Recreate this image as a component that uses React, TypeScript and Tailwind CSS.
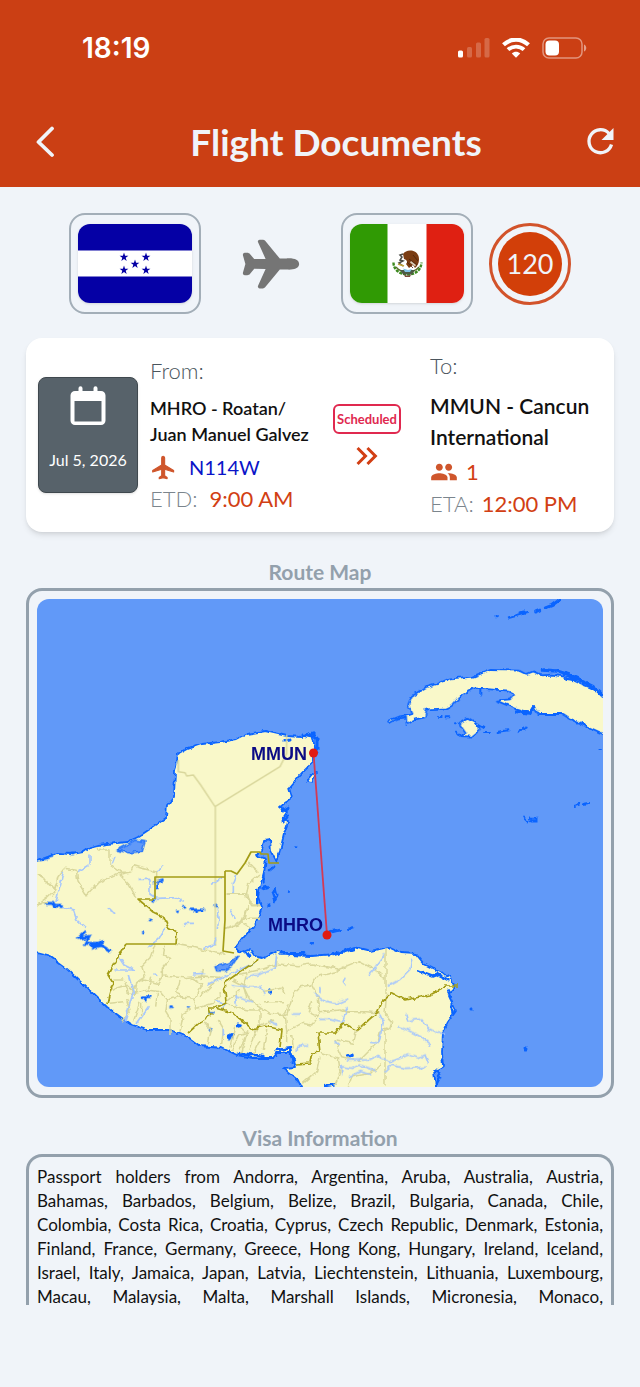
import { IoAirplane } from 'react-icons/io5'
import { MdKeyboardDoubleArrowRight, MdPeople } from 'react-icons/md'

const visaLines = [
  'Passport holders from Andorra, Argentina, Aruba, Australia, Austria,',
  'Bahamas, Barbados, Belgium, Belize, Brazil, Bulgaria, Canada, Chile,',
  'Colombia, Costa Rica, Croatia, Cyprus, Czech Republic, Denmark, Estonia,',
  'Finland, France, Germany, Greece, Hong Kong, Hungary, Ireland, Iceland,',
  'Israel, Italy, Jamaica, Japan, Latvia, Liechtenstein, Lithuania, Luxembourg,',
  'Macau, Malaysia, Malta, Marshall Islands, Micronesia, Monaco,',
]

function StatusBar() {
  return (
    <div className="flex h-24 items-center justify-between pl-[82px] pr-[53px]">
      <span className="font-['Inter',sans-serif] text-[28px] font-semibold leading-8">18:19</span>
      <div className="flex items-center gap-3">
        <svg width="32" height="20" viewBox="0 0 32 20" fill="currentColor" aria-hidden="true">
          <rect x="0" y="12.500" width="5" height="7" rx="1.500" />
          <rect x="9" y="9" width="5" height="10.500" rx="1.500" opacity=".22" />
          <rect x="18" y="4.500" width="5" height="15" rx="1.500" opacity=".22" />
          <rect x="26.500" y="0" width="5" height="19.500" rx="1.500" opacity=".22" />
        </svg>
        <svg width="28" height="20" viewBox="0 0 28 20" fill="none" stroke="currentColor" aria-hidden="true">
          <path d="M1.500 6.800C9 -.2 19 -.2 26.500 6.800" strokeWidth="4.200" />
          <path d="M6 11.700c4.300-4.200 11.700-4.200 16 0" strokeWidth="3.800" />
          <path d="M14 19.800l-4.200-4.300c2.400-2.300 6-2.300 8.400 0z" fill="currentColor" stroke="none" />
        </svg>
        <svg width="45" height="22" viewBox="0 0 45 22" aria-hidden="true">
          <rect x="1" y="1" width="39" height="20" rx="6" fill="none" stroke="#fff" strokeOpacity=".45" strokeWidth="1.500" />
          <rect x="3.500" y="3.500" width="13.500" height="15" rx="4" fill="#fff" />
          <path d="M42 7.500c3 1.200 3 5.800 0 7z" fill="#fff" opacity=".5" />
        </svg>
      </div>
    </div>
  )
}

function Header() {
  return (
    <header className="shrink-0 bg-[#cb3f14] text-white">
      <StatusBar />
      <div className="flex h-[91px] items-center justify-between pl-9 pr-6">
        <button type="button" aria-label="Back" className="w-[52px]">
          <svg width="20" height="32" viewBox="0 0 20 32" fill="none" stroke="#f0f4f9" strokeWidth="3.800" strokeLinecap="round" strokeLinejoin="round">
            <path d="M16 2.500L2.500 16 16 29" />
          </svg>
        </button>
        <h1 className="text-[37px] font-bold leading-10 text-[#f0f4f9]">Flight Documents</h1>
        <button type="button" aria-label="Refresh" className="text-[#f0f4f9]">
          <svg width="32" height="32" viewBox="0 0 32 32" fill="none" stroke="currentColor" strokeWidth="3.300">
            <path d="M25 7.500A11.500 11.500 0 1 0 27.500 18.500" />
            <path d="M29.500 2v12h-12z" fill="currentColor" stroke="none" />
          </svg>
        </button>
      </div>
    </header>
  )
}

function HondurasFlag() {
  const stars = [[46, 33], [68, 33], [57, 40], [46, 46], [68, 46]]
  return (
    <svg viewBox="0 0 114 79" className="h-[79px] w-[114px] rounded-xl shadow-sm" role="img" aria-label="Honduras">
      <path fill="#0500a5" d="M0 0h114v79H0z" />
      <path fill="#fff" d="M0 26.500h114v26H0z" />
      {stars.map(([x, y]) => (
        <path
          key={`${x}-${y}`}
          transform={`translate(${x} ${y})`}
          fill="#0500a5"
          d="M0-4.400l1.100 3.100h3.300L1.700.7l1 3.200L0 2l-2.700 1.900 1-3.200-2.700-2h3.300z"
        />
      ))}
    </svg>
  )
}

function MexicoFlag() {
  return (
    <svg viewBox="0 0 114 79" className="h-[79px] w-[114px] rounded-xl shadow-sm" role="img" aria-label="Mexico">
      <path fill="#fff" d="M0 0h114v79H0z" />
      <path fill="#309a04" d="M0 0h37.500v79H0z" />
      <path fill="#df2012" d="M76.500 0H114v79H76.500z" />
      <path d="M43.500 38.500c0 15 27 17 28 0" fill="none" stroke="#3d8a1f" strokeWidth="2.400" strokeDasharray="3 1" />
      <path d="M46 43c5 6 17 7 23 0" fill="none" stroke="#5b6b2a" strokeWidth="1.200" />
      <path d="M50 46h15l-3 4.500h-9z" fill="#4d5a45" />
      <path d="M53 44.500l5 1.500 4-1-2 3h-5z" fill="#7fc4e8" />
      <path d="M53 30c3-5 13-5 15.500 2 1.500 5-.5 10-3.500 12l-2-3-4 3-3-4c2-2 1-4-2-5z" fill="#7a3c12" />
      <path d="M59 35l8 6M57 38l6 6M63 31l5 6" stroke="#4a230a" strokeWidth=".8" />
      <path d="M61 37l5 4-1 1.500-5-4z" fill="#d9cdb8" />
      <path d="M53 30l-3 1 2 2-2 3 3 1-4 2 4 3" fill="none" stroke="#4b4b44" strokeWidth="1.500" />
      <path d="M48 40l6 2" stroke="#c0a43a" strokeWidth="1.500" />
      <path d="M54 50.500c2 1.500 5 1.500 7 0l-1 2.500h-5z" fill="#7c4a3a" />
    </svg>
  )
}

function FlagRow() {
  return (
    <div className="flex items-center justify-center">
      <div className="rounded-2xl border-2 border-[#a3aeb8] px-[7px] py-[9px]">
        <HondurasFlag />
      </div>
      <IoAirplane className="mx-10 h-[60px] w-[60px] text-[#757575]" aria-hidden="true" />
      <div className="rounded-2xl border-2 border-[#a3aeb8] px-[7px] py-[9px]">
        <MexicoFlag />
      </div>
      <div className="ml-4 rounded-full border-[3px] border-[#d2532b] p-[6px]">
        <div className="flex h-16 w-16 items-center justify-center rounded-full bg-[#d23f09] text-[27px] leading-8 text-[#f0f4f9]">
          120
        </div>
      </div>
    </div>
  )
}

function FlightCard() {
  return (
    <section className="flex items-center rounded-2xl bg-white py-3 pl-3 pr-5 shadow-md">
      <div className="flex h-[116px] w-[100px] shrink-0 flex-col items-center rounded-lg border border-[#3f484e] bg-[#57626a] pt-2 text-white shadow">
        <svg width="36" height="40" viewBox="0 0 36 40" aria-hidden="true">
          <path
            fill="#fff"
            fillRule="evenodd"
            d="M8.500 5V2.200a2 2 0 0 1 4 0V5h11V2.200a2 2 0 0 1 4 0V5H31a4.500 4.500 0 0 1 4.500 4.500v25A4.500 4.500 0 0 1 31 39H5a4.500 4.500 0 0 1-4.500-4.500v-25A4.500 4.500 0 0 1 5 5zM4.500 15v20.500h27V15z"
          />
        </svg>
        <span className="mt-6 whitespace-nowrap text-base leading-5">Jul 5, 2026</span>
      </div>
      <div className="ml-3 w-[180px] shrink-0">
        <p className="text-[22px] font-light leading-8 text-[#4b555d]">From:</p>
        <p className="mt-2 text-lg font-semibold leading-[26px] text-[#111]">
          MHRO - Roatan/
          <br />
          Juan Manuel Galvez
        </p>
        <p className="mt-1 flex items-center gap-3 text-xl leading-8 text-[#0a14c8]">
          <svg width="27" height="27" viewBox="0 0 24 24" fill="#cf562c" stroke="#cf562c" strokeWidth="1" strokeLinejoin="round" aria-hidden="true">
            <path d="M21 16v-1.300l-8-4.900V3.500c0-.8-.6-1.500-1.300-1.500s-1.300.7-1.300 1.500v6.300l-8 4.900V16l8-2.400v5.800l-2.200 1.500v1l3.500-.9 3.500.9v-1L13 19.400v-5.800z" />
          </svg>
          N114W
        </p>
        <p className="flex gap-3 text-[22px] leading-8 text-[#d23f14]">
          <span className="font-light text-[#7b858d]">ETD:</span>
          9:00 AM
        </p>
      </div>
      <div className="flex w-[74px] shrink-0 flex-col items-center pt-2">
        <span className="flex h-[30px] items-center rounded-md border-2 border-[#e0294f] px-[2px] text-[13px] font-bold leading-4 text-[#e0294f]">Scheduled</span>
        <MdKeyboardDoubleArrowRight className="mt-1 h-9 w-9 text-[#d23f14]" aria-hidden="true" />
      </div>
      <div className="ml-[26px] min-w-0 flex-1 whitespace-nowrap">
        <p className="text-[22px] font-light leading-8 text-[#4b555d]">To:</p>
        <p className="mt-2 text-[21px] font-semibold leading-[31px] text-[#111]">
          MMUN - Cancun
          <br />
          International
        </p>
        <p className="mt-1 flex items-center gap-2 text-[22px] leading-8 text-[#d23f14]">
          <MdPeople className="h-7 w-7 text-[#cf562c]" aria-hidden="true" />1
        </p>
        <p className="flex gap-2 text-[22px] leading-8 text-[#d23f14]">
          <span className="font-light text-[#7b858d]">ETA:</span>
          12:00 PM
        </p>
      </div>
    </section>
  )
}

function RouteMap() {
  return (
    <svg viewBox="37 599 566 488" className="block w-full rounded-xl bg-[#6199f8]" role="img" aria-label="Route from MHRO to MMUN">
      <defs>
        <filter id="rough" x="-5%" y="-5%" width="110%" height="110%" colorInterpolationFilters="sRGB">
          <feTurbulence type="fractalNoise" baseFrequency="0.16" numOctaves="2" seed="4" />
          <feDisplacementMap in="SourceGraphic" scale="5" xChannelSelector="R" yChannelSelector="G" />
        </filter>
      </defs>

      {/* coastline */}
      <g filter="url(#rough)" fill="#f9f8c9" stroke="#0a64ff" strokeWidth="1.800" strokeLinejoin="round">
        <path d="M25 865l12-4 8-3 12-5 15 1 11-2 7-5 8-2 19-2 10-1 11-5 12-8 16-11 1-13 7-8 1-25 3-18 9-5 15-5 18-2 17-3 10-5 18-3 22 5 15 1 6-5 5 6 2 9-2 15-13 13-11 13 3 10-12 9 7 5-4 6 5 4-4 12-4 17-3 11-6-11-1-12-6 1-2 11-6 4 10 4-2 13-4 15-2 10 4 10-5 15-13 15-9 11 6 4 8-3 5 7 9 2 16-7 12 4 20 1 23-2 20-7 17 4 17-4 13 6 15 1 8 10 14 7 13 6 3 9-5 10 7 15-8 11-5 10-1 20 1 15-9 5 4 30H308l-10-22-15-12 13-1-4-14-15 0-4 5-20 0-16-3-15-7-22-2-12-9-18-7h-23l-17-6-23-17-20-19-20-19-19-14-23-6z" />
        <path d="M308 779l6-7 2 1-4 10-4-1z" />
        <g transform="translate(320 580) scale(.33333)" strokeWidth="5.400">
          <path d="M205 422l30-12 30-5 12-4-12-28 10-25 40-25 40-12 35-16 70-5 50-20 90 2 20 10 20-8 25 12 30-2 40 6 45 20 50 20 35 30V468L795 437 745 415 725 402H655L640 380 628 398 585 385 528 362 570 358 582 345 570 332 460 325 420 350 395 378 380 385 320 388 315 412 285 418 260 432 258 412 232 416 208 430z" />
          <path d="M418 430l25-14 30 18 4 18-22 18-35-2 18-10z" />
        </g>
      </g>

      {/* islands, cays and lakes */}
      <g filter="url(#rough)" stroke="#0a64ff" fill="none" strokeLinecap="round">
        <g transform="translate(320 580) scale(.33333)" strokeWidth="9">
          <path d="M568 112l30-8 22-6M600 98l12-2M647 96l15-6M676 84l20-8 22-16M528 110h1" />
          <path d="M670 270l40 3 40 12 40 18 35 25 20 20M740 295l40 5 40 20M590 395l40 5 12-20" strokeWidth="10" />
          <path d="M357 411h8M380 412h8M492 459h18M530 456l35-5M596 455l24-12M408 455l10 10M484 330v14M405 430h2M475 436l15 8M762 678l15-4M790 672l18-3M838 510h8" strokeWidth="6" />
          <path d="M612 712l12 12 4-12M632 716h18v6h-16z" strokeWidth="5" />
        </g>
        <path d="M471 1010h1M525 1049h1M285 741l5-1M302 735l10 2M312 733l4 4M317 738v14M283 811l6-4M283 822l4-5" strokeWidth="3" />
        <g transform="translate(220 820) scale(.33333)" strokeWidth="8">
          <path d="M226 80h2M207 215h2M146 257h2M270 370h8M330 334l32-4M388 326l8-2M157 222l10-15 5 20-8 15zM133 160v30M150 150l12-10M112 210v40M128 205l15-4" />
          <path d="M598 452l40 15 12-5 35 18M685 515l8 15M695 560l3 20M170 690l40-5 8 40M60 700l70 8M650 750l10 20-12 25M315 798l30-5M80 395l10 15M182 400h70M340 405l60-18" />
          <path d="M385 708l8-2M150 510v6M56 615v3M26 650l10-5" strokeWidth="11" />
        </g>
        <g transform="translate(20 820) scale(.33333)" strokeWidth="8">
          <path d="M78 250h20l5 8 22 2M175 355l30-5-10 20 35 0-8 12 20-6 30 18M180 350l14-12M215 380l30-15" strokeWidth="9" />
          <path d="M405 188l22-6M412 190v14M512 270h40M530 272v4M472 272h1M490 262h5M584 258h4M370 336h2M390 300h1M398 241h6M370 530h18M376 535v6M452 560h3M505 563h2M570 628h3M572 580h5M630 650v5M656 615h3M712 100v8M60 120l35-10M155 102h4M655 700l40 5" />
          <path d="M585 440l40-10 30-22-20 30-20 15-25 0zM290 90l55-30 30 5-8 28-38 6z" fill="#6199f8" strokeWidth="4" />
        </g>
      </g>

      {/* departments */}
      <g fill="none" stroke="#d9d79c" strokeWidth="4.500" strokeLinejoin="round">
        <path transform="translate(20 550) scale(.33333)" d="M475 630v35l20 3 5 10 20-3 22 30 43 65 195-120 20-40V555M586 768v420" />
        <g filter="url(#rough)">
          <path
            transform="translate(20 820) scale(.33333)"
            d="M232 78l6 12h32v45l30 22h32l8-20 25 8 45 10v40M332 157l-30 5-8-2-60 28-35 38-25-40-5-35-35-6-20 25-10 40-20 20-40 30-10 35M52 165l30 18 20 25-2 22M300 165l28 30 20 38M52 248h32M405 373l-15 40-25 25 10 35-25 15-5 35-20 0-10-40M467 373l60 10 60 15 30 5M435 380l-5 25 22 10-25 30 0 25-15 20-40-10-45 30M430 468l60 5 60-5 60 5M270 510l50-15 25 25 40-10 35 5 20 25-5 30 15 25v50M320 540l10 30-25 35M340 605l20-60M385 510l10-40M445 540l30-10 50 5 20-40-30-20M520 535l10 30 50-15 25-30M480 480l-10 40 30 15M540 480l10-30M600 470l-60 60M270 550l40-5M480 635l10-55 25-15M565 670l8-40-20-25M605 675l5-50-15-25M635 690l20-45 30-10M665 700l15-60-20-20M700 700l20-40M620 222h55l20 35h25M615 325l40-10 20-20 45 0M685 255l-10 40M680 130l30 25M620 545l30 20 40 5 30 0M640 480l30 15 10 40M365 545v40M412 520l-5 40M310 480h-30"
          />
          <path
            transform="translate(220 820) scale(.33333)"
            d="M170 400v32l-40 15-90 20M175 432l60 5 40-5 80 15-5 8-60 15-15 25-35 5-20 20-20 65-50-5-30-20M355 450l60-25 50 25 30 25M498 385v135M275 495l20 40 5 40-25 40-30-5-45 25v30M275 545l-10 30 30 15M200 635l-5-60 10-25M215 645l5 40M380 575h60l40 5M300 575l60-5 30 10M500 520l-5 60 20 25-5 20-30 10-5 30-60 60M410 630l-10 40-50-10M495 625v175M295 695l60 20 5 40-15 40M250 790l40-35 10-45M345 660l20 50 40 10M385 800l10-30 60-10 30-30M80 460l-10 40 20 40 30 20 0 60M125 515l60-10 10 20M135 545l60 0M0 560l60-50M60 690l20-50M90 690l20-65M130 690l10-60M30 680l15-60M160 600l-50 20M85 125l30 30M20 222h60l5-30 35-30M80 222l15 30h25M70 310l25 15M15 325l50-20 20-45"
          />
        </g>
      </g>

      {/* rivers */}
      <g filter="url(#rough)" fill="none" stroke="#a9c8fa" strokeWidth="5" strokeLinecap="round">
        <path
          transform="translate(20 820) scale(.33333)"
          d="M210 102v30l-35 22M130 155l-10 45-12 45M130 262l30 8 10 30 28 25M285 112l-8 20M425 138l-10 15M355 178h35v45l20 12 60-2 20 10M592 265l5 30-5 30M488 318l8-8h25M435 325l-18 30-30 25M572 195l35-22M650 165l-10 25v25M630 270l15 25M265 268l22 12M552 385l30-10 5-18M295 405l20 30 30 15-60 0M325 465l15 50-20 70-5 15M387 560l-35 50M562 495l60-30 80-35M520 462l35-2M645 525l5 30M590 542l25 10-8 15M610 625v20M405 462l5 5"
        />
        <path
          transform="translate(220 820) scale(.33333)"
          d="M575 418l-5 30-30 30-35 20M493 405l-45 60M375 475l-5 10 8 10M283 522l35 25 30 5 35-15M302 598h25l40 10 15-45M220 582h20M300 500v15M480 585l10 20-10 50-5 15-20-3M558 582l5 20 40-5 25 30 25 12 20 0M537 620l25 10 40 20 30 25M385 720h60l30-10 40 15 50-20 30 10 20-10 10 25M365 765l0-25 30 5 20-10 50 15M385 770l40-15 30 10M495 755l20-20 40 10 60-3M228 690l15-15 20 0M80 475l60-20 25-10 5-40M40 495l40 5 40 0 15 20M45 530l50 15M345 665l10 8M150 605l20 10"
        />
      </g>

      {/* country borders */}
      <g fill="none" stroke="#a39c16" strokeWidth="1.700" strokeLinejoin="round">
        <path d="M155 899v-22h70M225 871v49l-2 31 11 2M126 944h50M225 871l6 0 6 3 8-11 6-11h9l1 2h7l1 9h10" />
        <g filter="url(#rough)">
          <path d="M107 1004l3-12 3-9-5-8 7-13 11-18M176 944l1-12-9-5-5-10-10-5-15-13h17" />
          <path d="M259 959l-35 24 2 19-11 6h-6l2 7-11 7-12 11M215 1008l18 5 19 16 13-3 17 4-2 17M296 1064l14-1 2-10 8-1-2-19 17 0 8-10 14 7 21-18 4-10 10-9 13 7 25-5 17-9h11" />
        </g>
      </g>

      {/* route */}
      <path d="M313.500 753L327 935" stroke="#d23a55" strokeWidth="1.800" />
      <circle cx="313.500" cy="753" r="4.500" fill="#e01b12" />
      <circle cx="327" cy="935" r="4.500" fill="#e01b12" />
      <path d="M332 932l8-2M349 929l4-2" stroke="#0a64ff" strokeWidth="2.400" />
      <g fill="#0b0b85" className="font-['Liberation_Sans',sans-serif] text-[18px] font-bold">
        <text x="251" y="760">MMUN</text>
        <text x="268" y="931">MHRO</text>
      </g>
    </svg>
  )
}

export default function App() {
  return (
    <div className="flex h-screen flex-col bg-[#f0f4f9] pb-[82px] font-['Lato',sans-serif]">
      <Header />
      <main className="min-h-0 flex-1 overflow-hidden px-[26px] pt-[26px]">
        <FlagRow />
        <div className="mt-6">
          <FlightCard />
        </div>
        <h2 className="mt-6 text-center text-[21px] font-bold leading-8 text-[#93a0ac]">Route Map</h2>
        <div className="rounded-2xl border-[3px] border-[#93a0ac] p-2">
          <RouteMap />
        </div>
        <h2 className="mt-6 text-center text-[21px] font-bold leading-8 text-[#93a0ac]">Visa Information</h2>
        <div className="rounded-t-2xl border-[3px] border-b-0 border-[#93a0ac] p-2 text-[17px] leading-6 text-[#111]">
          {visaLines.map((line) => (
            <p key={line} className="whitespace-nowrap [text-align-last:justify]">
              {line}
            </p>
          ))}
        </div>
      </main>
    </div>
  )
}
